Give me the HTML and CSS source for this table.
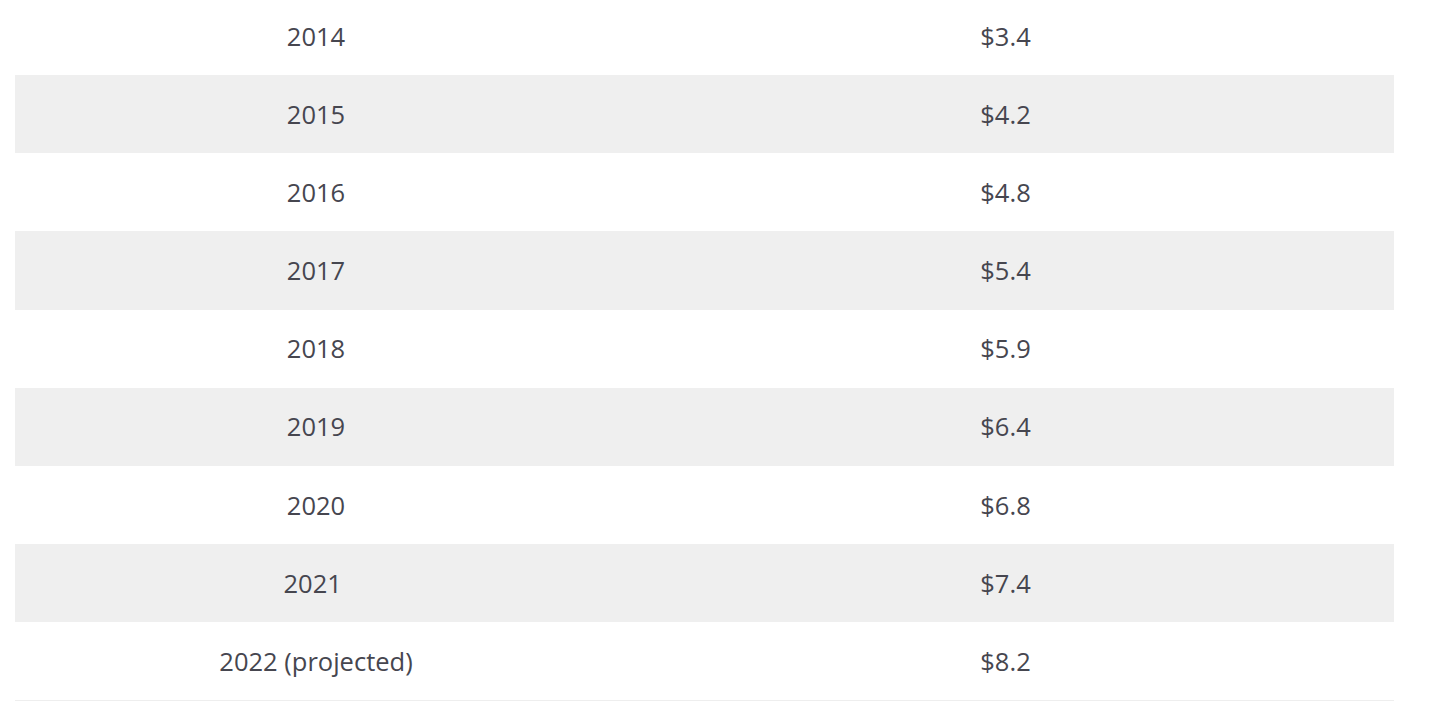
FILE: index.html
```html
<!DOCTYPE html>
<html lang="en">
<head>
<meta charset="utf-8">
<title>Revenue by year</title>
<link rel="stylesheet" href="styles.css">
</head>
<body>
<table class="data-table">
  <colgroup>
    <col class="col-year">
    <col class="col-value">
  </colgroup>
  <tbody>
    <tr><td>2014</td><td>$3.4</td></tr>
    <tr><td>2015</td><td>$4.2</td></tr>
    <tr><td>2016</td><td>$4.8</td></tr>
    <tr><td>2017</td><td>$5.4</td></tr>
    <tr><td>2018</td><td>$5.9</td></tr>
    <tr><td>2019</td><td>$6.4</td></tr>
    <tr><td>2020</td><td>$6.8</td></tr>
    <tr><td>2021&nbsp;</td><td>$7.4</td></tr>
    <tr><td>2022 (projected)</td><td>$8.2</td></tr>
  </tbody>
</table>
</body>
</html>
```
FILE: styles.css
```css
html, body {
  margin: 0;
  padding: 0;
  background: #ffffff;
}
body {
  padding-left: 15px;
  font-family: "Open Sans", "Noto Sans", "Liberation Sans", sans-serif;
  color: #46464f;
  overflow: hidden;
}
.data-table {
  margin-top: -3px;
  width: 1379px;
  border-collapse: collapse;
  table-layout: fixed;
}
.col-year { width: 602px; }
.col-value { width: 777px; }
.data-table td {
  height: 78.125px;
  padding: 0;
  text-align: center;
  vertical-align: middle;
  font-size: 25.5px;
  line-height: 1.2;
}
.data-table tr:nth-child(even) td {
  background: #efefef;
}
.data-table tr:last-child td {
  border-bottom: 1px solid #eeeeee;
}
```
